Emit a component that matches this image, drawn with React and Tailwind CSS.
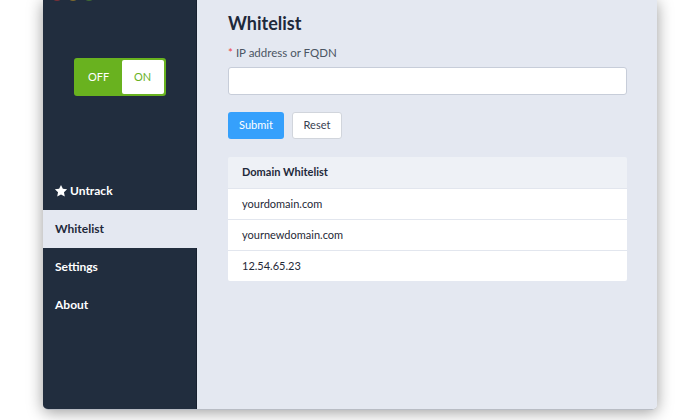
import React from "react";

function StarIcon() {
  return (
    <svg width="14" height="14" viewBox="0 0 24 24" className="mr-[2px] mb-[1px]">
      <path
        fill="white"
        d="M12 1.5l3.2 6.7 7.3.9-5.4 5.1 1.4 7.3L12 18l-6.5 3.5 1.4-7.3-5.4-5.1 7.3-.9z"
      />
    </svg>
  );
}

export default function App() {
  const font = { fontFamily: "Lato, 'Noto Sans', sans-serif" };
  const rows = ["yourdomain.com", "yournewdomain.com", "12.54.65.23"];
  return (
    <div className="w-[700px] h-[420px] bg-white overflow-hidden pl-[43px]" style={font}>
      <div className="relative w-[614px] h-[410px] rounded-b-[5px] flex overflow-hidden shadow-[0_2px_16px_rgba(0,0,0,0.4)] border-b border-[#b8bcc4]">
        <div className="absolute top-[-11px] left-[8px] flex gap-[4px]">
          <div className="w-[12px] h-[12px] rounded-full bg-[#7a3038]" />
          <div className="w-[12px] h-[12px] rounded-full bg-[#7d6a2e]" />
          <div className="w-[12px] h-[12px] rounded-full bg-[#3f6b33]" />
        </div>
        <div className="w-[154px] shrink-0 bg-[#212d3e] border-r border-[#172130] flex flex-col">
          <div className="flex justify-center pt-[58px]">
            <div className="w-[92px] h-[38px] bg-[#69b21f] rounded-[3px] p-[2px] flex">
              <div className="w-[46px] flex items-center justify-center text-white text-[11px]">OFF</div>
              <div className="flex-1 bg-white rounded-[2px] flex items-center justify-center text-[#69b21f] text-[11px]">ON</div>
            </div>
          </div>
          <div className="mt-[76px] flex flex-col text-[12px] font-bold">
            <div className="h-[38px] flex items-center pl-[11px] text-white">
              <StarIcon />
              Untrack
            </div>
            <div className="h-[38px] flex items-center pl-[12px] bg-[#e4e8f1] text-[#1e293b] mr-[-1px]">Whitelist</div>
            <div className="h-[38px] flex items-center pl-[12px] text-white">Settings</div>
            <div className="h-[38px] flex items-center pl-[12px] text-white">About</div>
          </div>
        </div>
        <div className="flex-1 bg-[#e4e8f1] pl-[31px] pr-[30px] pt-[10px]">
          <h1 className="text-[18px] font-bold text-[#1e293b] leading-[26px]">Whitelist</h1>
          <div className="mt-[9px] text-[11.5px] text-[#4b5563] leading-[16px]">
            <span className="text-[#ef4444] mr-[3px]">*</span>IP address or FQDN
          </div>
          <div className="mt-[6px] h-[28px] bg-white border border-[#c7cdd9] rounded-[3px]" />
          <div className="mt-[17px] flex gap-[8px]">
            <button className="w-[56px] h-[27px] bg-[#35a0fc] text-white text-[11px] rounded-[3px]">Submit</button>
            <button className="w-[50px] h-[27px] bg-white border border-[#d1d5dc] text-[#374151] text-[11px] rounded-[3px]">Reset</button>
          </div>
          <div className="mt-[18px] rounded-[2px] overflow-hidden">
            <div className="h-[31px] bg-[#eef1f6] flex items-center pl-[14px] text-[11px] font-bold text-[#1e293b]">Domain Whitelist</div>
            {rows.map((r) => (
              <div key={r} className="h-[31px] bg-white border-t border-[#e2e6ee] flex items-center pl-[14px] text-[11px] text-[#1f2937]">{r}</div>
            ))}
          </div>
        </div>
      </div>
    </div>
  );
}
